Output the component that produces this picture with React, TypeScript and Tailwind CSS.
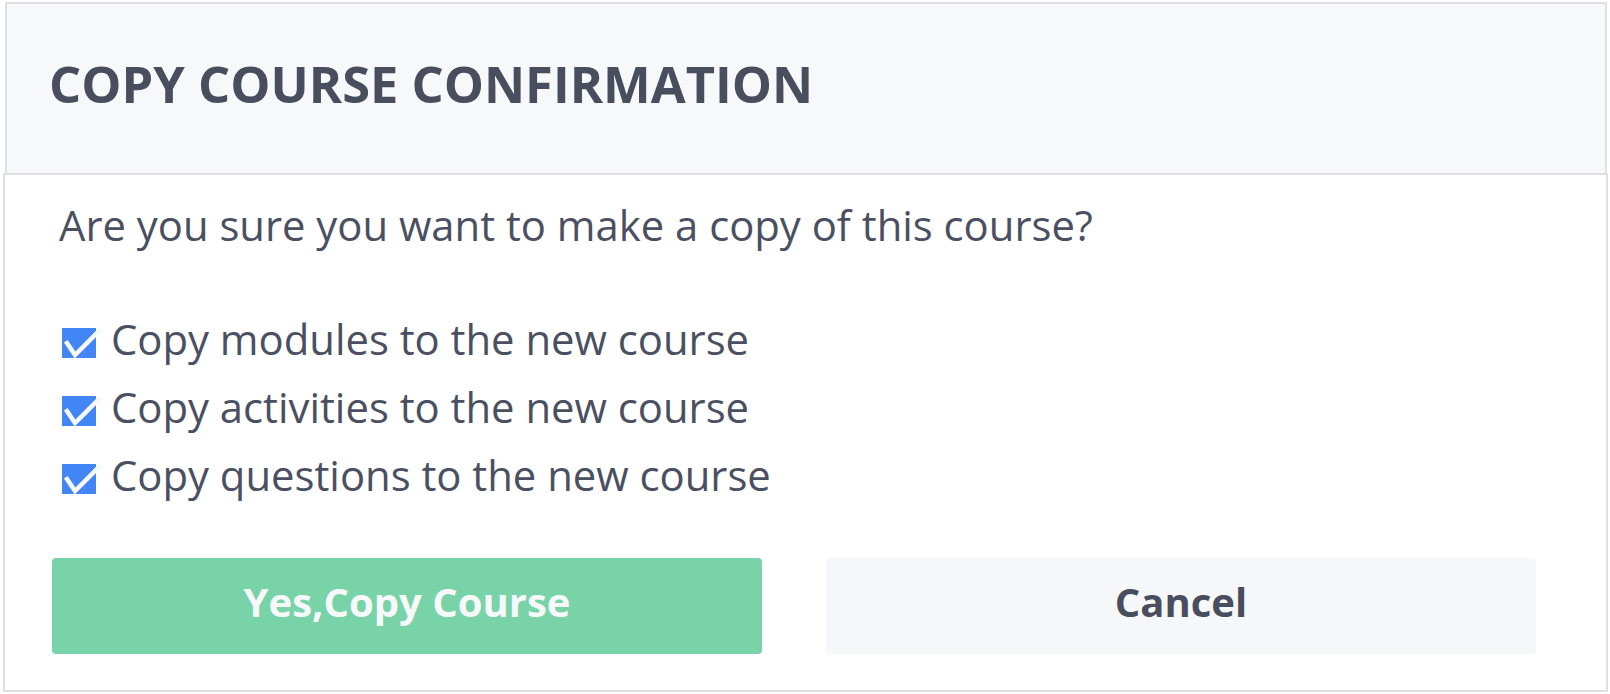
import React, { useState } from "react";

const options = [
  { id: "modules", label: "Copy modules to the new course" },
  { id: "activities", label: "Copy activities to the new course" },
  { id: "questions", label: "Copy questions to the new course" },
];

function CheckBox({ checked }: { checked: boolean }) {
  return (
    <svg width="38" height="32" viewBox="0 0 38 32" className="shrink-0 overflow-visible">
      <rect x="0" y="2" width="34" height="30" fill={checked ? "#4285f4" : "#ffffff"} stroke={checked ? "none" : "#c9ced6"} />
      {checked && (
        <path d="M5 17 L13 29 L37 5" fill="none" stroke="#f5f7fa" strokeWidth="4.5" strokeLinecap="square" strokeLinejoin="miter" />
      )}
    </svg>
  );
}

export default function App() {
  const [checked, setChecked] = useState<Record<string, boolean>>({
    modules: true,
    activities: true,
    questions: true,
  });

  const toggle = (id: string) => setChecked((prev) => ({ ...prev, [id]: !prev[id] }));

  return (
    <div
      className="w-[1610px] h-[694px] bg-white pt-[2px] pl-[3px] text-[#4a5061]"
      style={{ fontFamily: '"Open Sans", "Liberation Sans", sans-serif' }}
    >
      {/* header */}
      <div className="ml-[2px] w-[1602px] h-[171px] bg-[#f7f8fa] border-2 border-b-0 border-[#e0e0e0] flex items-center pl-[42px] pb-[8px]">
        <h2 className="text-[50.6px] font-bold leading-none text-[#484e5e]">
          COPY COURSE CONFIRMATION
        </h2>
      </div>

      {/* body */}
      <div className="w-[1605px] h-[519px] border-2 border-[#e0e0e0] pt-[25px] pl-[47px]">
        <p className="ml-[7px] text-[41.8px] leading-[50px]">Are you sure you want to make a copy of this course?</p>

        <div className="mt-[55px] ml-[10px] flex flex-col">
          {options.map((o) => (
            <label key={o.id} className="h-[68px] flex items-center gap-[11px] cursor-pointer" onClick={() => toggle(o.id)}>
              <span className="mt-[6px]">
                <CheckBox checked={checked[o.id]} />
              </span>
              <span className="text-[41.8px] leading-[68px]">{o.label}</span>
            </label>
          ))}
        </div>

        <div className="mt-[49px] flex gap-[64px]">
          <button className="w-[710px] h-[96px] rounded-[4px] bg-[#79d3a8] text-[#f7f8fa] text-[40px] font-bold pb-[8px]">
            Yes,Copy Course
          </button>
          <button className="w-[710px] h-[96px] rounded-[4px] bg-[#f6f7f9] text-[#484e5e] text-[40px] font-bold pb-[8px]">
            Cancel
          </button>
        </div>
      </div>
    </div>
  );
}
